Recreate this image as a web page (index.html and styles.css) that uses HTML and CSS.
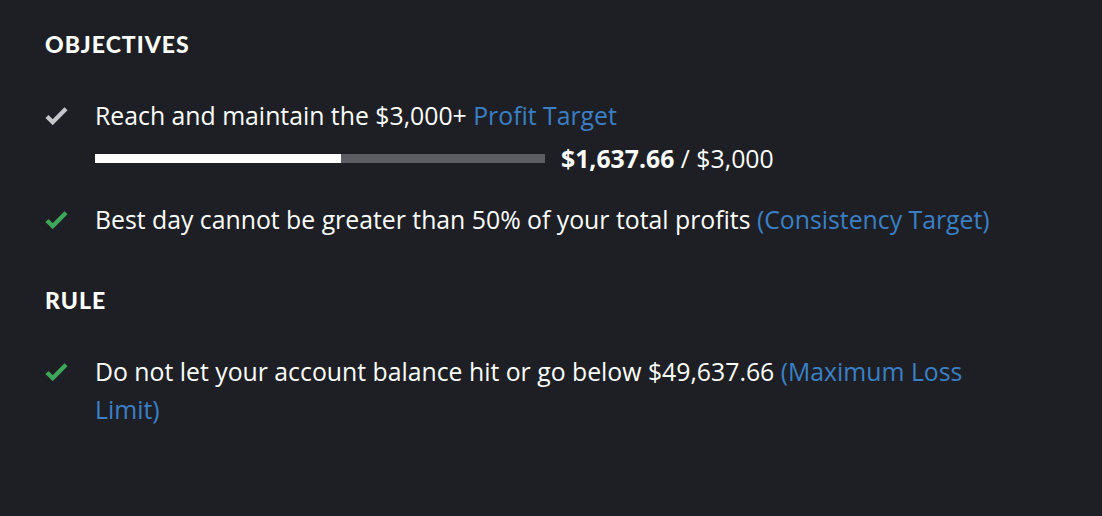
FILE: index.html
```html
<!DOCTYPE html>
<html lang="en">
<head>
    <meta charset="UTF-8">
    <link rel="stylesheet" href="styles.css">
    <title>Objectives</title>
</head>
<body>
    <div class="panel">
        <h2 class="section-title">OBJECTIVES</h2>
        <ul class="checklist">
            <li class="item">
                <svg class="check check-grey" viewBox="0 0 24 20"><path d="M2 11 L8 17 L22 3" /></svg>
                <div class="item-body">
                    <div>Reach and maintain the $3,000+ <a class="link">Profit Target</a></div>
                    <div class="progress-row">
                        <div class="progress"><div class="progress-fill" style="width: 54.6%"></div></div>
                        <span class="progress-text"><b>$1,637.66</b> / $3,000</span>
                    </div>
                </div>
            </li>
            <li class="item">
                <svg class="check check-green" viewBox="0 0 24 20"><path d="M2 11 L8 17 L22 3" /></svg>
                <div class="item-body">Best day cannot be greater than 50% of your total profits <a class="link">(Consistency Target)</a></div>
            </li>
        </ul>
        <h2 class="section-title">RULE</h2>
        <ul class="checklist">
            <li class="item">
                <svg class="check check-green" viewBox="0 0 24 20"><path d="M2 11 L8 17 L22 3" /></svg>
                <div class="item-body">Do not let your account balance hit or go below $49,637.66 <a class="link">(Maximum Loss Limit)</a></div>
            </li>
        </ul>
    </div>
</body>
</html>
```

FILE: styles.css
```css
body {
    margin: 0;
    background-color: #1e1f24;
    color: #ffffff;
    font-family: "Open Sans", Lato, sans-serif;
}

.panel {
    padding: 29px 0 0 45px;
    width: 960px;
}

.section-title {
    margin: 0 0 37px;
    font-family: Lato, "Open Sans", sans-serif;
    font-size: 23px;
    line-height: 30px;
    font-weight: 900;
    letter-spacing: 1px;
}

.checklist {
    list-style: none;
    margin: 0 0 47px;
    padding: 0;
}

.item {
    display: flex;
    align-items: flex-start;
    gap: 27px;
    font-size: 24.8px;
    line-height: 38px;
    margin-bottom: 23px;
}

.check {
    flex: none;
    width: 23px;
    height: 19px;
    margin-top: 10px;
}

.check path {
    fill: none;
    stroke-width: 4.5;
}

.check-grey path {
    stroke: #c6c7cb;
}

.check-green path {
    stroke: #3fa75a;
}

.link {
    color: #3a80c6;
}

.progress-row {
    display: flex;
    align-items: center;
    gap: 16px;
    margin-top: 5px;
}

.progress {
    width: 450px;
    height: 9px;
    background-color: #5c5d62;
}

.progress-fill {
    height: 100%;
    background-color: #ffffff;
}

.progress-text b {
    font-weight: 700;
}
```
